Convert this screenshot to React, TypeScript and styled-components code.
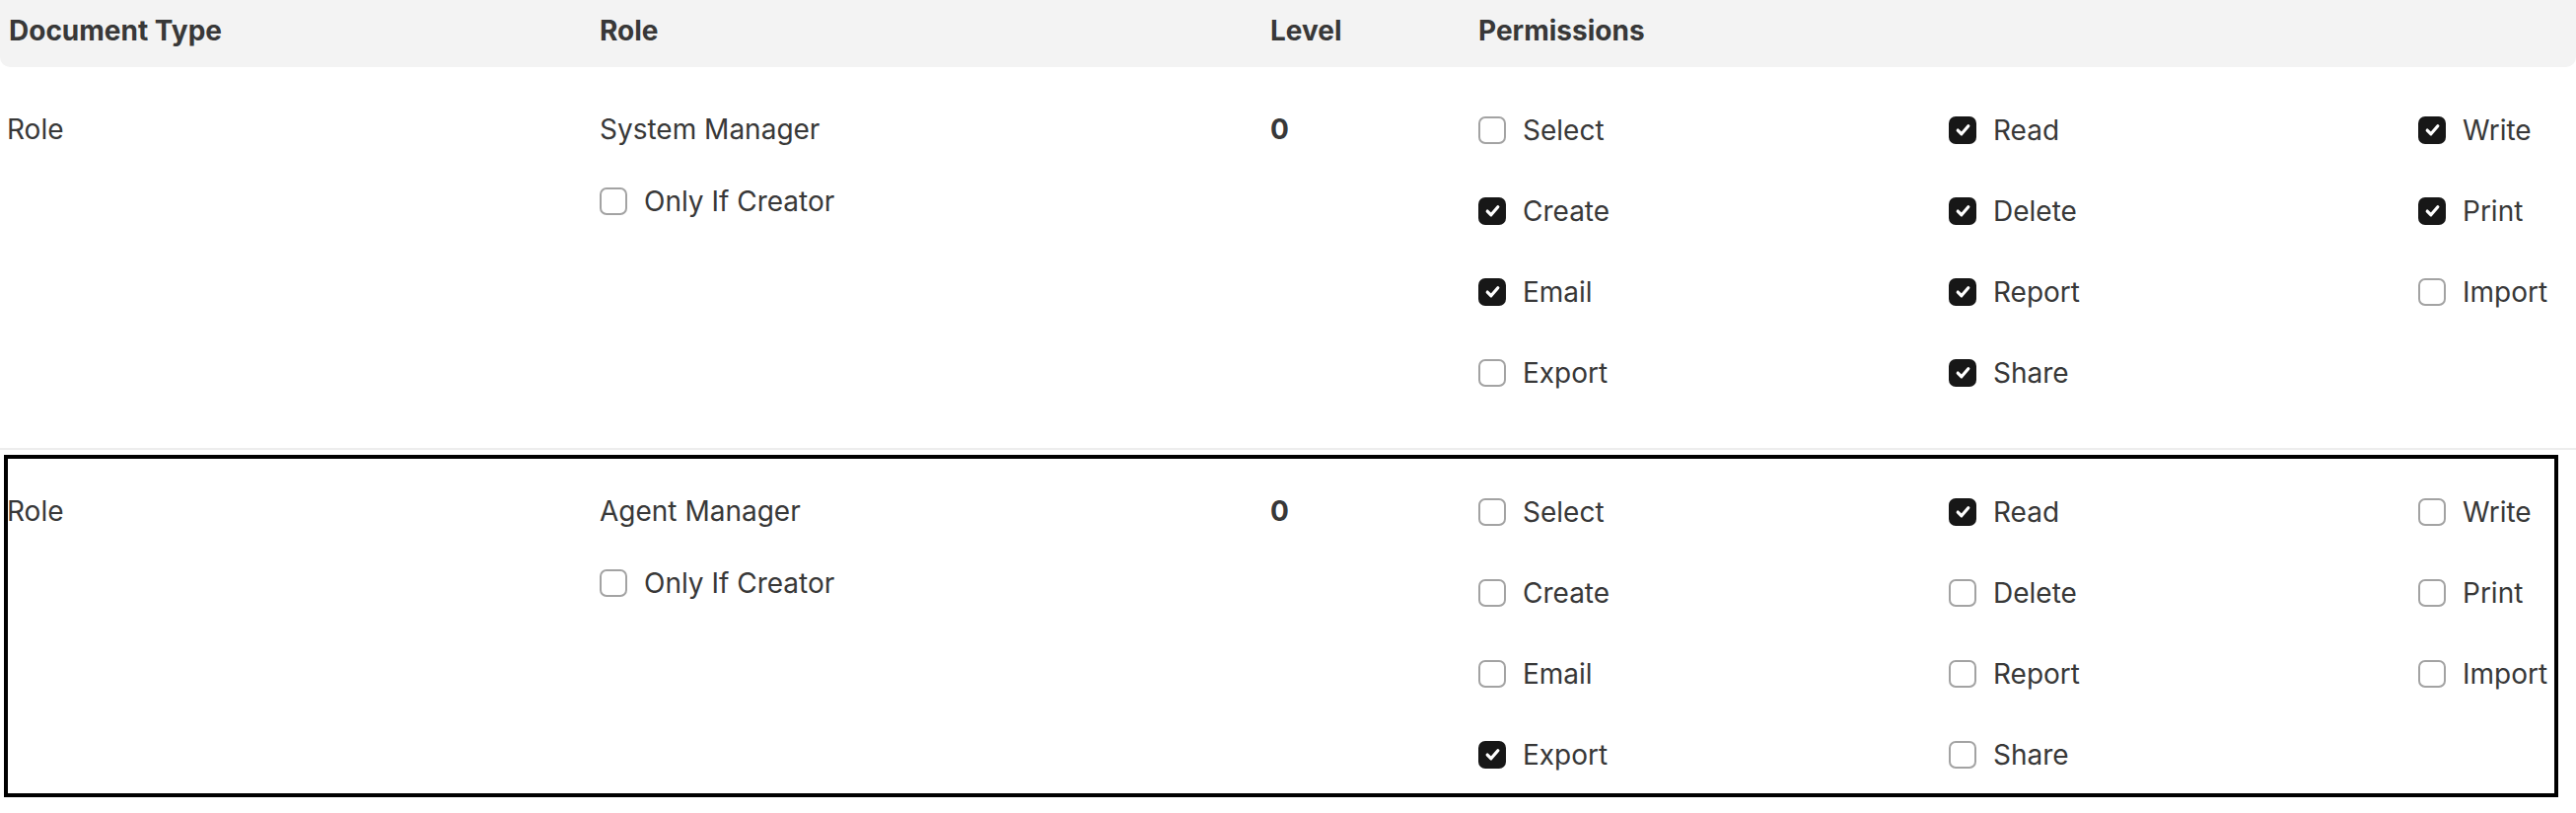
import React from 'react';
import styled, { createGlobalStyle } from 'styled-components';

const GlobalStyle = createGlobalStyle`
  body {
    margin: 0;
    background: #ffffff;
    font-family: 'Inter', 'Noto Sans', sans-serif;
    color: #383838;
  }
`;

interface PermissionRow {
  docType: string;
  role: string;
  level: number;
  onlyIfCreator: boolean;
  permissions: Record<string, boolean>;
  highlighted?: boolean;
}

const permissionNames = [
  'Select', 'Read', 'Write',
  'Create', 'Delete', 'Print',
  'Email', 'Report', 'Import',
  'Export', 'Share',
];

const rows: PermissionRow[] = [
  {
    docType: 'Role',
    role: 'System Manager',
    level: 0,
    onlyIfCreator: false,
    permissions: {
      Select: false, Read: true, Write: true,
      Create: true, Delete: true, Print: true,
      Email: true, Report: true, Import: false,
      Export: false, Share: true,
    },
  },
  {
    docType: 'Role',
    role: 'Agent Manager',
    level: 0,
    onlyIfCreator: false,
    highlighted: true,
    permissions: {
      Select: false, Read: true, Write: false,
      Create: false, Delete: false, Print: false,
      Email: false, Report: false, Import: false,
      Export: true, Share: false,
    },
  },
];

const Table = styled.div`
  width: 2612px;
  min-height: 824px;
  display: flex;
  flex-direction: column;
`;

const columns = `599px 680px 211px 1fr`;

const HeaderRow = styled.div`
  display: grid;
  grid-template-columns: ${columns};
  align-items: center;
  height: 68px;
  padding: 0 0 6px 9px;
  box-sizing: border-box;
  background: #f3f3f3;
  border-radius: 0 0 10px 10px;
`;

const HeaderCell = styled.div`
  font-size: 28px;
  line-height: 33px;
  font-weight: 700;
  color: #383838;
`;

const Row = styled.div<{ $highlighted?: boolean }>`
  display: grid;
  grid-template-columns: ${columns};
  align-items: start;
  box-sizing: border-box;
  ${({ $highlighted }) =>
    $highlighted
      ? `
    margin: 5px 18px 0 4px;
    padding: 37px 0 23px 1px;
    border: 4px solid #000;
  `
      : `
    padding: 47px 0 60px 9px;
    border-bottom: 2px solid #ededed;
  `}
`;

const Cell = styled.div`
  font-size: 28px;
  line-height: 33px;
  color: #383838;
`;

const TypeCell = styled(Cell)`
  margin-left: -2px;
`;

const LevelCell = styled(Cell)`
  font-weight: 700;
`;

const RoleCell = styled.div`
  display: flex;
  flex-direction: column;
  gap: 39px;
`;

const PermGrid = styled.div`
  display: grid;
  grid-template-columns: 477px 476px auto;
  row-gap: 49px;
`;

const CheckLabel = styled.label`
  display: flex;
  align-items: center;
  gap: 17px;
  height: 33px;
  font-size: 28px;
  color: #383838;
  white-space: nowrap;
`;

const Box = styled.span<{ $checked: boolean }>`
  width: 28px;
  height: 28px;
  box-sizing: border-box;
  border-radius: 7px;
  flex-shrink: 0;
  display: flex;
  align-items: center;
  justify-content: center;
  background: ${({ $checked }) => ($checked ? '#171717' : '#ffffff')};
  border: ${({ $checked }) => ($checked ? 'none' : '2px solid #a3a3a3')};
`;

const Checkbox: React.FC<{ checked: boolean; label: string }> = ({ checked, label }) => (
  <CheckLabel>
    <Box $checked={checked}>
      {checked && (
        <svg width="17" height="17" viewBox="0 0 16 16" fill="none">
          <path d="M3 8.5 L6.5 12 L13 4.5" stroke="#fff" strokeWidth="3" strokeLinecap="round" strokeLinejoin="round" />
        </svg>
      )}
    </Box>
    {label}
  </CheckLabel>
);

const App: React.FC = () => {
  return (
    <>
      <GlobalStyle />
      <Table>
        <HeaderRow>
          <HeaderCell>Document Type</HeaderCell>
          <HeaderCell>Role</HeaderCell>
          <HeaderCell>Level</HeaderCell>
          <HeaderCell>Permissions</HeaderCell>
        </HeaderRow>
        {rows.map((row, index) => (
          <Row key={index} $highlighted={row.highlighted}>
            <TypeCell>{row.docType}</TypeCell>
            <RoleCell>
              <Cell>{row.role}</Cell>
              <Checkbox checked={row.onlyIfCreator} label="Only If Creator" />
            </RoleCell>
            <LevelCell>{row.level}</LevelCell>
            <PermGrid>
              {permissionNames.map((name) => (
                <Checkbox key={name} checked={row.permissions[name]} label={name} />
              ))}
            </PermGrid>
          </Row>
        ))}
      </Table>
    </>
  );
};

export default App;
